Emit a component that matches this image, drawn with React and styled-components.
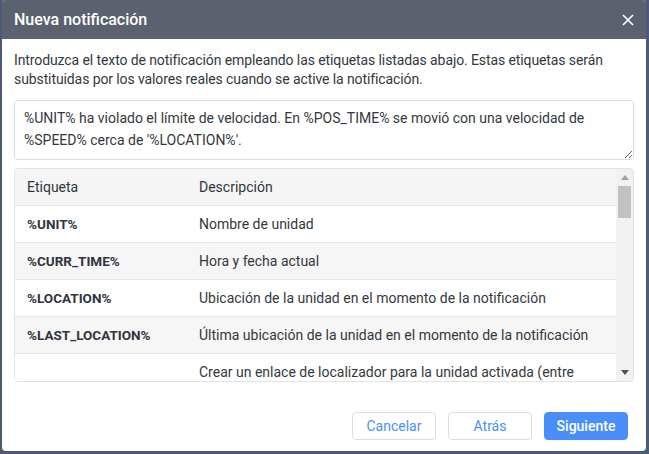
import React from 'react'
import styled, { createGlobalStyle } from 'styled-components'

const Global = createGlobalStyle`
  html, body {
    margin: 0;
    padding: 0;
    background: #4c5a76;
    font-family: Roboto, "Liberation Sans", Arial, sans-serif;
  }
  * { box-sizing: border-box; }
`

const Dialog = styled.div`
  margin-left: 2px;
  width: 644px;
  height: 451px;
  background: #fff;
  border-radius: 4px;
  overflow: hidden;
  display: flex;
  flex-direction: column;
`

const Header = styled.div`
  height: 39px;
  background: #5b616f;
  color: #fff;
  display: flex;
  align-items: center;
  justify-content: space-between;
  padding: 0 12px 0 12px;
  font-size: 16px;
  font-weight: 500;
`

const Close = styled.button`
  border: none;
  background: none;
  padding: 0;
  color: #fff;
  display: flex;
  cursor: pointer;
`

const Body = styled.div`
  flex: 1;
  padding: 12px 10px 0 12px;
  display: flex;
  flex-direction: column;
`

const Intro = styled.p`
  margin: 0;
  font-size: 14px;
  line-height: 19px;
  color: #333840;
  letter-spacing: -0.1px;
`

const TextArea = styled.textarea`
  margin-top: 11px;
  width: 620px;
  height: 60px;
  border: 1px solid #dcdcdc;
  border-radius: 4px;
  padding: 6px 9px;
  font-family: inherit;
  font-size: 14px;
  line-height: 22px;
  color: #333840;
  resize: vertical;
  outline: none;
`

const TableWrap = styled.div`
  margin-top: 8px;
  width: 620px;
  height: 214px;
  border: 1px solid #e3e3e3;
  border-radius: 4px;
  display: flex;
  overflow: hidden;
`

const Rows = styled.div`
  flex: 1;
  display: flex;
  flex-direction: column;
`

const Row = styled.div`
  height: 37px;
  flex-shrink: 0;
  display: grid;
  grid-template-columns: 172px 1fr;
  align-items: center;
  padding-left: 12px;
  border-bottom: 1px solid #e6e6e6;
  background: ${p => (p.$alt ? '#f6f6f6' : '#fff')};
  font-size: 14px;
  color: #333840;
  white-space: nowrap;
`

const HeadRow = styled(Row)`
  background: #f5f5f5;
  color: #2f3540;
`

const Tag = styled.span`
  font-size: 13.5px;
  font-weight: 700;
  color: #2f3540;
`

const Scroll = styled.div`
  width: 17px;
  background: #f1f1f1;
  display: flex;
  flex-direction: column;
  align-items: center;
`

const Arrow = styled.div`
  height: 17px;
  width: 17px;
  display: flex;
  align-items: center;
  justify-content: center;
`

const Thumb = styled.div`
  width: 13px;
  height: 32px;
  background: #c1c1c1;
`

const Track = styled.div`
  flex: 1;
`

const Footer = styled.div`
  display: flex;
  justify-content: flex-end;
  gap: 12px;
  padding: 0 18px 11px 0;
`

const Button = styled.button`
  width: 84px;
  height: 28px;
  border-radius: 4px;
  font-family: inherit;
  font-size: 14px;
  cursor: pointer;
  border: 1px solid ${p => (p.$primary ? '#4a8ff9' : '#dcdcdc')};
  background: ${p => (p.$primary ? '#4a8ff9' : '#fff')};
  color: ${p => (p.$primary ? '#fff' : '#4a8ff9')};
  font-weight: ${p => (p.$primary ? 500 : 400)};
`

const rows = [
  ['%UNIT%', 'Nombre de unidad'],
  ['%CURR_TIME%', 'Hora y fecha actual'],
  ['%LOCATION%', 'Ubicación de la unidad en el momento de la notificación'],
  ['%LAST_LOCATION%', 'Última ubicación de la unidad en el momento de la notificación'],
  ['', 'Crear un enlace de localizador para la unidad activada (entre'],
]

export default function App() {
  return (
    <>
      <Global />
      <Dialog>
        <Header>
          <span>Nueva notificación</span>
          <Close>
            <svg width="12" height="12" viewBox="0 0 12 12">
              <path d="M1 1L11 11M11 1L1 11" stroke="#fff" strokeWidth="1.6" />
            </svg>
          </Close>
        </Header>
        <Body>
          <Intro>
            Introduzca el texto de notificación empleando las etiquetas listadas abajo. Estas etiquetas serán substituidas por los valores reales cuando se active la notificación.
          </Intro>
          <TextArea defaultValue="%UNIT% ha violado el límite de velocidad. En %POS_TIME% se movió con una velocidad de %SPEED% cerca de '%LOCATION%'." />
          <TableWrap>
            <Rows>
              <HeadRow>
                <span>Etiqueta</span>
                <span>Descripción</span>
              </HeadRow>
              {rows.map(([tag, desc], i) => (
                <Row key={i} $alt={i % 2 === 1}>
                  <Tag>{tag}</Tag>
                  <span>{desc}</span>
                </Row>
              ))}
            </Rows>
            <Scroll>
              <Arrow>
                <svg width="8" height="5" viewBox="0 0 8 5"><path d="M0 5L4 0L8 5Z" fill="#a3a3a3" /></svg>
              </Arrow>
              <Thumb />
              <Track />
              <Arrow>
                <svg width="8" height="5" viewBox="0 0 8 5"><path d="M0 0L8 0L4 5Z" fill="#505050" /></svg>
              </Arrow>
            </Scroll>
          </TableWrap>
          <div style={{ flex: 1 }} />
        </Body>
        <Footer>
          <Button>Cancelar</Button>
          <Button>Atrás</Button>
          <Button $primary>Siguiente</Button>
        </Footer>
      </Dialog>
    </>
  )
}
